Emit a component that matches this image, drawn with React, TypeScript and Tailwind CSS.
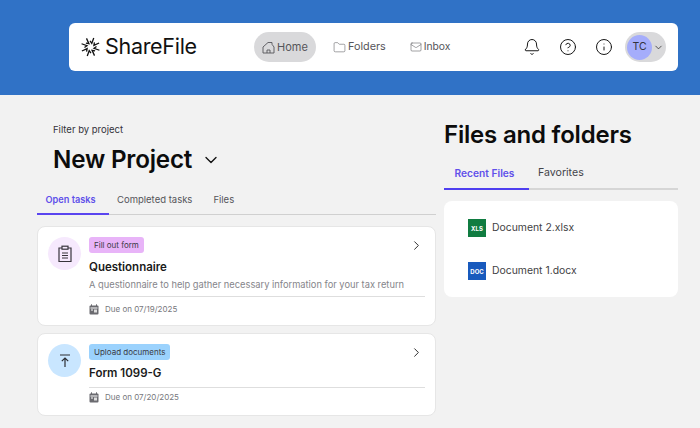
import React from "react";
import { Bell, ChevronDown, ChevronRight, CircleHelp, Folder, Info, Mail } from "lucide-react";

const FONT = "font-['Inter','Liberation_Sans',sans-serif]";

// ShareFile mark: eight small arrows pointing at an open centre
function Logo() {
  const angles = [20, 65, 110, 155, 200, 245, 290, 335];
  return (
    <svg width="19" height="20" viewBox="0 0 38 40" fill="none" stroke="#111" strokeWidth="2.6">
      {angles.map((a) => (
        <g key={a} transform={`rotate(${a} 19 20)`}>
          <path d="M19 1v11.5l-5-3.5" />
        </g>
      ))}
    </svg>
  );
}

function HomeIcon() {
  return (
    <svg width="13" height="13" viewBox="0 0 13 13" fill="none" stroke="#55555a" strokeWidth="0.9">
      <path d="M1 12V6l5-4.5h4v1.8L12 6v6z" />
      <path d="M8 12V9H5v3" />
    </svg>
  );
}

function ClipboardIcon() {
  return (
    <svg width="16" height="18" viewBox="0 0 16 18" fill="none" stroke="#38343c" strokeWidth="1.2">
      <path d="M5 3H2v13.5h12V3h-3" />
      <rect x="5" y="1.2" width="6" height="3" />
      <path d="M5 8h6M5 10.5h6M5 13h6" />
    </svg>
  );
}

function DueIcon() {
  return (
    <svg width="10" height="11" viewBox="0 0 10 11" className="shrink-0">
      <rect x="0.5" y="1.5" width="9" height="9" rx="1" fill="#6b6b70" />
      <rect x="1.5" y="3.5" width="7" height="1" fill="#fff" />
      <rect x="2" y="0.3" width="1" height="2" fill="#6b6b70" />
      <rect x="7" y="0.3" width="1" height="2" fill="#6b6b70" />
      <rect x="2" y="5.5" width="2" height="1" fill="#fff" />
      <rect x="5" y="5.5" width="3" height="3" fill="#ddd" />
    </svg>
  );
}

function UploadIcon() {
  return (
    <svg width="16" height="16" viewBox="0 0 16 16" fill="none" stroke="#2d2d33" strokeWidth="1.2">
      <path d="M3 2h10M8 14V5M4.8 8.2 8 5l3.2 3.2" />
    </svg>
  );
}

function NavItem({ icon, label, className }: { icon: React.ReactNode; label: string; className: string }) {
  return (
    <div className={`flex h-[30px] items-center text-[#55555a] ${className}`}>
      {icon}
      <span>{label}</span>
    </div>
  );
}

function TaskCard({
  iconBg,
  icon,
  tagBg,
  tag,
  title,
  description,
  due,
  className,
}: {
  iconBg: string;
  icon: React.ReactNode;
  tagBg: string;
  tag: string;
  title: string;
  description?: string;
  due: string;
  className: string;
}) {
  return (
    <div className={`flex rounded-[8px] border border-[#e6e6e6] bg-white pl-[10px] pr-[10px] pt-[10px] ${className}`}>
      <div className={`flex h-[33px] w-[33px] shrink-0 items-center justify-center rounded-full ${iconBg}`}>{icon}</div>
      <div className="ml-[8px] flex-1">
        <div className="flex items-start justify-between">
          <span className={`rounded-[3px] px-[5px] py-[2px] text-[8px] leading-[12px] text-[#3a3a44] ${tagBg}`}>{tag}</span>
          <ChevronRight size={15} strokeWidth={1.5} className="mr-[1px] mt-[1px] text-[#222]" />
        </div>
        <div className={`text-[11.5px] font-semibold leading-[16px] text-[#1a1a1a] ${description ? "mt-[6px]" : "mt-[5px]"}`}>{title}</div>
        {description && <div className="mt-[2px] text-[9.3px] leading-[16px] text-[#85858a]">{description}</div>}
        <div className={`flex items-center gap-[6px] border-t border-[#dedede] text-[8px] leading-[12px] text-[#77777c] ${description ? "mt-[3px] pt-[6px]" : "mt-[6px] pt-[3px]"}`}>
          <DueIcon />
          <span>{due}</span>
        </div>
      </div>
    </div>
  );
}

function FileRow({ bg, ext, name }: { bg: string; ext: string; name: string }) {
  return (
    <div className="-ml-[1px] flex items-center gap-[6px]">
      <div className={`flex h-[18px] w-[18px] items-center justify-center text-[6px] font-bold text-white ${bg}`}>{ext}</div>
      <span className="text-[10.4px] text-[#3f3f44]">{name}</span>
    </div>
  );
}

export default function App() {
  return (
    <div className={`${FONT} h-[428px] w-[700px] overflow-hidden bg-[#f2f2f2]`}>
      {/* Header */}
      <div className="h-[95px] bg-[#3072c6] pl-[69px] pr-[22px] pt-[23px]">
        <div className="flex h-[48px] items-center rounded-[6px] bg-white pl-[12px] pr-[12px]">
          <Logo />
          <span className="ml-[5px] w-[91px] text-[21.5px] leading-none tracking-[-0.3px] text-[#111]">ShareFile</span>
          <NavItem
            className="ml-[58px] w-[62px] justify-center gap-[2px] rounded-[15px] bg-[#d9d9db] text-[11px]"
            icon={<HomeIcon />}
            label="Home"
          />
          <NavItem className="ml-[17px] gap-[2px] text-[10.8px]" icon={<Folder size={13} strokeWidth={1} />} label="Folders" />
          <NavItem className="ml-[24px] gap-[2px] text-[10.3px]" icon={<Mail size={12} strokeWidth={1.1} />} label="Inbox" />
          <Bell size={18} strokeWidth={1.3} className="ml-auto text-[#111]" />
          <CircleHelp size={18} strokeWidth={1.3} className="ml-[18px] text-[#111]" />
          <Info size={18} strokeWidth={1.3} className="ml-[18px] text-[#111]" />
          <div className="ml-[12px] flex h-[30px] w-[41px] items-center rounded-[15px] bg-[#d9d9db] pl-[2px]">
            <div className="flex h-[25px] w-[25px] items-center justify-center rounded-full bg-[#a5adfb] text-[10.5px] text-[#33333a]">TC</div>
            <ChevronDown size={11} strokeWidth={1.6} className="ml-[1px] text-[#222]" />
          </div>
        </div>
      </div>

      {/* Main */}
      <div className="flex gap-[8px] pl-[37px] pt-[16px]">
        <div className="w-[399px]">
          <div className="mt-[13px] pl-[16px] text-[9.5px] leading-[12px] text-[#33333a]">Filter by project</div>
          <div className="mt-[9px] flex items-center pl-[16px]">
            <span className="text-[24.2px] font-semibold leading-[30px] tracking-[-0.2px] text-[#0c0c0c]">New Project</span>
            <ChevronDown size={20} strokeWidth={1.6} className="ml-[9px] text-[#111]" />
          </div>
          <div className="mt-[12px] flex h-[28px] border-b border-[#d0d0d0] text-[9.5px] leading-[26px]">
            <div className="h-[28px] w-[72px] border-b-2 border-[#5a45f0] pr-[5px] text-center text-[9.2px] font-semibold text-[#6050ea]">Open tasks</div>
            <div className="ml-[8px] text-[#55555a]">Completed tasks</div>
            <div className="ml-[21px] text-[#55555a]">Files</div>
          </div>
          <div className="mt-[11px] flex flex-col gap-[7px]">
            <TaskCard
              className="h-[100px]"
              iconBg="bg-[#f6e9fd]"
              icon={<ClipboardIcon />}
              tagBg="bg-[#e8b4f8]"
              tag="Fill out form"
              title="Questionnaire"
              description="A questionnaire to help gather necessary information for your tax return"
              due="Due on 07/19/2025"
            />
            <TaskCard
              className="h-[83px]"
              iconBg="bg-[#c9e6ff]"
              icon={<UploadIcon />}
              tagBg="bg-[#9bd2fd]"
              tag="Upload documents"
              title="Form 1099-G"
              due="Due on 07/20/2025"
            />
          </div>
        </div>

        <div className="w-[234px]">
          <div className="mt-[8px] text-[24px] font-semibold leading-[32px] tracking-[-0.2px] text-[#0c0c0c]">Files and folders</div>
          <div className="mt-[9px] flex h-[30px] border-b-2 border-[#d6d6d6] text-[10.6px] leading-[26px]">
            <div className="h-[30px] w-[85px] border-b-2 border-[#4f3ff0] pr-[4px] text-center text-[10.2px] font-semibold text-[#6050ea]">Recent Files</div>
            <div className="ml-[9px] text-[#44444a]">Favorites</div>
          </div>
          <div className="mt-[11px] flex h-[96px] flex-col gap-[25px] rounded-[8px] bg-white pl-[25px] pt-[18px]">
            <FileRow bg="bg-[#107c41]" ext="XLS" name="Document 2.xlsx" />
            <FileRow bg="bg-[#185abd]" ext="DOC" name="Document 1.docx" />
          </div>
        </div>
      </div>
    </div>
  );
}
